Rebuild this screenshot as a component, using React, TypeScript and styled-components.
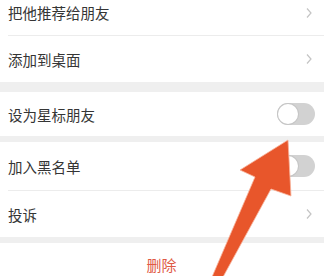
import styled, { createGlobalStyle } from "styled-components";

const GlobalStyle = createGlobalStyle`
  html, body {
    margin: 0;
    padding: 0;
    background: #efefef;
    overflow: hidden;
  }
  body {
    font-family: "Noto Sans CJK SC", "Noto Sans", sans-serif;
  }
`;

const Page = styled.div`
  position: relative;
  width: 324px;
  height: 276px;
  overflow: hidden;
  background: #efefef;
`;

const List = styled.div`
  display: flex;
  flex-direction: column;
  margin-top: -10px;
`;

const Group = styled.div<{ $gap?: number }>`
  background: #fff;
  margin-bottom: ${(p) => p.$gap ?? 0}px;
  display: flex;
  flex-direction: column;
`;

const Row = styled.div<{ $h: number; $center?: boolean }>`
  height: ${(p) => p.$h}px;
  display: flex;
  align-items: center;
  justify-content: ${(p) => (p.$center ? "center" : "space-between")};
  padding: 0 9px 0 8px;
`;

const Label = styled.span`
  font-size: 14.5px;
  color: #353535;
`;

const Danger = styled.span`
  font-size: 15px;
  color: #e05a45;
  margin-top: -3px;
`;

const Divider = styled.div`
  height: 1px;
  margin-left: 8px;
  background: #ececec;
`;

const Switch = styled.div`
  width: 38px;
  height: 22px;
  border-radius: 11px;
  background: #d2d2d2;
  position: relative;
`;

const Knob = styled.div`
  position: absolute;
  left: 1px;
  top: 1px;
  width: 20px;
  height: 20px;
  border-radius: 50%;
  background: #fff;
  box-shadow: 0 0 0 1px #c6c6c6;
`;

const Overlay = styled.svg`
  position: absolute;
  left: 0;
  top: 0;
  pointer-events: none;
`;

const Chevron = () => (
  <svg width="8" height="12" viewBox="0 0 8 12" style={{ marginRight: 2 }}>
    <polyline points="2,1.5 6,6 2,10.5" fill="none" stroke="#c4c4c4" strokeWidth="1.2" />
  </svg>
);

const Toggle = () => (
  <Switch>
    <Knob />
  </Switch>
);

export default function App() {
  return (
    <Page>
      <GlobalStyle />
      <List>
        <Group $gap={10}>
          <Row $h={45}>
            <Label>把他推荐给朋友</Label>
            <Chevron />
          </Row>
          <Divider />
          <Row $h={46}>
            <Label>添加到桌面</Label>
            <Chevron />
          </Row>
        </Group>
        <Group $gap={6}>
          <Row $h={44}>
            <Label>设为星标朋友</Label>
            <Toggle />
          </Row>
        </Group>
        <Group $gap={6}>
          <Row $h={48}>
            <Label>加入黑名单</Label>
            <Toggle />
          </Row>
          <Divider />
          <Row $h={46}>
            <Label>投诉</Label>
            <Chevron />
          </Row>
        </Group>
        <Group>
          <Row $h={46} $center>
            <Danger>删除</Danger>
          </Row>
        </Group>
      </List>
      <Overlay width="324" height="276" viewBox="0 0 324 276">
        <polygon
          points="288,140 291,196 271,189 223,277 212,277 255,177 240,170"
          fill="#e8562b"
          stroke="#f7b49c"
          strokeWidth="0.8"
          strokeLinejoin="round"
        />
      </Overlay>
    </Page>
  );
}
